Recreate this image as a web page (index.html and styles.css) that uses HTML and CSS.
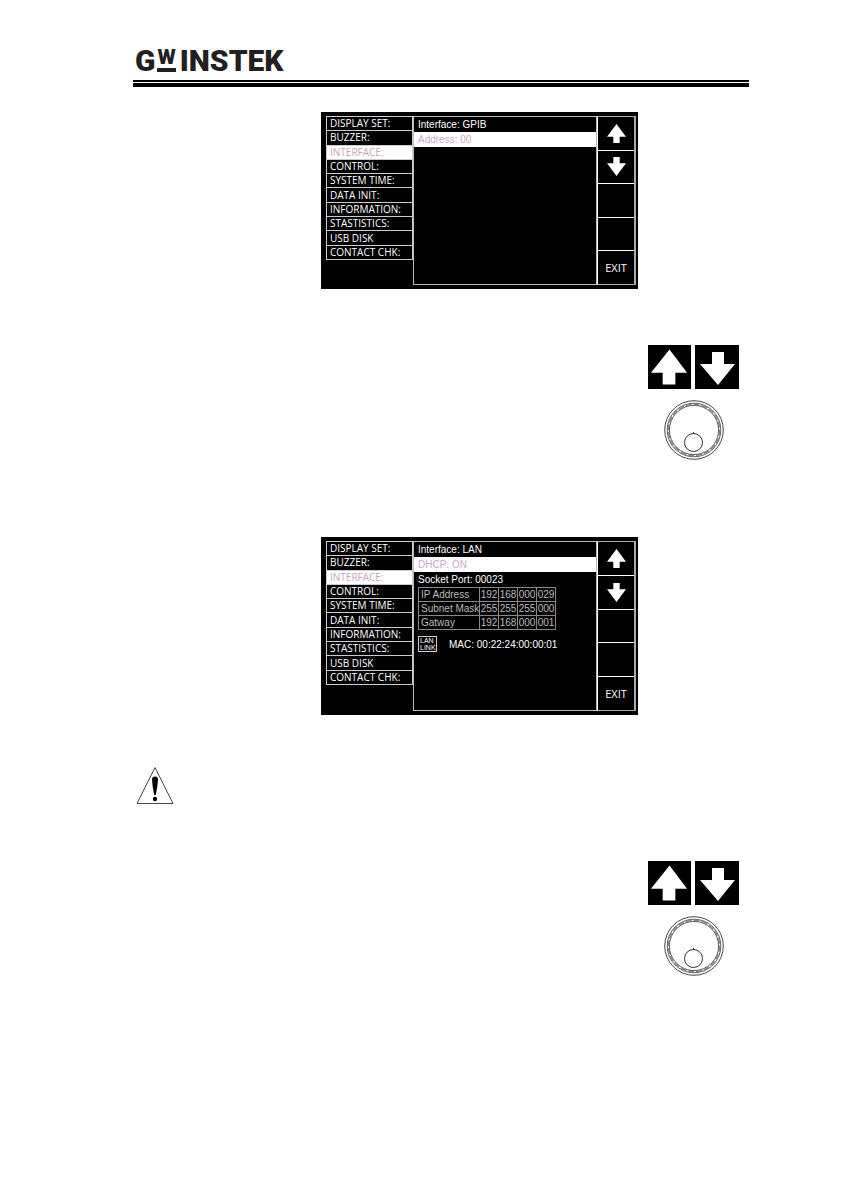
FILE: index.html
```
<!DOCTYPE html>
<html lang="en">
<head>
    <meta charset="UTF-8">
    <meta name="viewport" content="width=device-width, initial-scale=1.0">
    <title>GW Instek - Interface settings</title>
    <link rel="stylesheet" href="styles.css">
</head>
<body>

    <!-- shared shapes -->
    <svg class="symbols" aria-hidden="true">
        <symbol id="arrow-up" viewBox="0 0 18 18">
            <path d="M9 0L18 12H12V18H6V12H0Z" fill="#fff"/>
        </symbol>
        <symbol id="arrow-down" viewBox="0 0 18 18">
            <path d="M9 18L18 6H12V0H6V6H0Z" fill="#fff"/>
        </symbol>
        <symbol id="key-up" viewBox="0 0 44 44">
            <path d="M22 4L40 28H28V40H15V28H3Z" fill="#fff"/>
        </symbol>
        <symbol id="key-down" viewBox="0 0 44 44">
            <path d="M23 40L40 19H29V7H17V19H5Z" fill="#fff"/>
        </symbol>
        <symbol id="knob" viewBox="0 0 60 60">
            <g fill="none" stroke="#333">
                <circle cx="30" cy="30" r="29.3" stroke-width="0.9"/>
                <circle cx="30" cy="30" r="26.8" stroke-width="0.8"/>
                <circle cx="30" cy="30" r="25.7" stroke="#888" stroke-width="1.4" stroke-dasharray="6 2"/>
                <circle cx="30" cy="30" r="24.6" stroke-width="0.8"/>
                <circle cx="29.5" cy="42.5" r="9" stroke-width="1"/>
                <path d="M29.5 32v2" stroke-width="1"/>
            </g>
        </symbol>
    </svg>

    <header class="page-header">
        <div class="logo"><span>G</span><span class="logo-w">W</span><span>INSTEK</span></div>
        <div class="rule"></div>
    </header>

    <main>
        <section class="screen">
            <ul class="menu">
                <li><button>DISPLAY SET:</button></li>
                <li><button>BUZZER:</button></li>
                <li><button class="active">INTERFACE:</button></li>
                <li><button>CONTROL:</button></li>
                <li><button>SYSTEM TIME:</button></li>
                <li><button>DATA INIT:</button></li>
                <li><button>INFORMATION:</button></li>
                <li><button>STASTISTICS:</button></li>
                <li><button>USB DISK</button></li>
                <li><button>CONTACT CHK:</button></li>
            </ul>
            <div class="panel">
                <p>Interface: GPIB</p>
                <p class="selected">Address: 00</p>
            </div>
            <div class="softkeys">
                <button aria-label="Up"><svg><use href="#arrow-up"/></svg></button>
                <button aria-label="Down"><svg><use href="#arrow-down"/></svg></button>
                <button aria-label="Softkey 3"></button>
                <button aria-label="Softkey 4"></button>
                <button>EXIT</button>
            </div>
        </section>

        <div class="controls">
            <button class="key" aria-label="Up"><svg><use href="#key-up"/></svg></button>
            <button class="key" aria-label="Down"><svg><use href="#key-down"/></svg></button>
            <svg class="knob"><use href="#knob"/></svg>
        </div>

        <section class="screen lan">
            <ul class="menu">
                <li><button>DISPLAY SET:</button></li>
                <li><button>BUZZER:</button></li>
                <li><button class="active">INTERFACE:</button></li>
                <li><button>CONTROL:</button></li>
                <li><button>SYSTEM TIME:</button></li>
                <li><button>DATA INIT:</button></li>
                <li><button>INFORMATION:</button></li>
                <li><button>STASTISTICS:</button></li>
                <li><button>USB DISK</button></li>
                <li><button>CONTACT CHK:</button></li>
            </ul>
            <div class="panel">
                <p>Interface: LAN</p>
                <p class="selected">DHCP: ON</p>
                <p>Socket Port: 00023</p>
                <table class="address-table">
                    <tr><th scope="row">IP Address</th><td>192</td><td>168</td><td>000</td><td>029</td></tr>
                    <tr><th scope="row">Subnet Mask</th><td>255</td><td>255</td><td>255</td><td>000</td></tr>
                    <tr><th scope="row">Gatway</th><td>192</td><td>168</td><td>000</td><td>001</td></tr>
                </table>
                <div class="mac-row">
                    <span class="lan-link">LAN<br>LINK</span>
                    <span>MAC: 00:22:24:00:00:01</span>
                </div>
            </div>
            <div class="softkeys">
                <button aria-label="Up"><svg><use href="#arrow-up"/></svg></button>
                <button aria-label="Down"><svg><use href="#arrow-down"/></svg></button>
                <button aria-label="Softkey 3"></button>
                <button aria-label="Softkey 4"></button>
                <button>EXIT</button>
            </div>
        </section>

        <svg class="warning" viewBox="0 0 38 38" role="img" aria-label="Caution">
            <path d="M19 0.5L37 36.5H1Z" fill="none" stroke="#333" stroke-width="0.9"/>
            <path d="M16 12.5Q16 9.5 19 9.5T22 12.5Q21.6 20 19.8 28H18.2Q16.4 20 16 12.5Z"/>
            <circle cx="19" cy="32" r="2.2"/>
        </svg>

        <div class="controls">
            <button class="key" aria-label="Up"><svg><use href="#key-up"/></svg></button>
            <button class="key" aria-label="Down"><svg><use href="#key-down"/></svg></button>
            <svg class="knob"><use href="#knob"/></svg>
        </div>
    </main>

</body>
</html>
```
FILE: styles.css
```
* {
    box-sizing: border-box;
}
body {
    margin: 0;
    padding: 46px 93px 40px 133px;
    background: white;
    font-family: "Liberation Sans", Arial, sans-serif;
}
p, ul {
    margin: 0;
    padding: 0;
}
button {
    margin: 0;
    padding: 0;
    border: none;
    background: black;
    color: white;
    cursor: pointer;
}
svg {
    display: block;
}
.symbols {
    position: absolute;
    width: 0;
    height: 0;
}
.logo {
    display: flex;
    align-items: flex-start;
    gap: 2px;
    height: 34px;
    padding-left: 2px;
    font-family: Roboto, sans-serif;
    font-weight: 900;
    font-size: 30px;
    line-height: 30px;
    color: #231f20;
}
.logo-w {
    height: 26px;
    margin-right: 2px;
    border-bottom: 4px solid #231f20;
    font-size: 21px;
    line-height: 22px;
}
.rule {
    height: 7px;
    border-top: 2px solid black;
    border-bottom: 4px solid black;
}
main {
    display: flex;
    flex-direction: column;
}
.screen {
    display: grid;
    grid-template-columns: 87px 1fr 39px;
    width: 317px;
    margin: 25px 0 0 188px;
    padding: 4px 2px 4px 5px;
    background: black;
    color: white;
}
.menu {
    display: flex;
    flex-direction: column;
    height: 144px;
    border: 1px solid #ccc;
    list-style: none;
}
.menu li {
    display: flex;
    flex: 1;
}
.menu li + li {
    border-top: 1px solid #ccc;
}
.menu button {
    flex: 1;
    padding-left: 3px;
    font-family: "Open Sans", sans-serif;
    font-weight: 500;
    font-size: 10px;
    line-height: 13px;
    text-align: left;
}
.menu .active {
    background: white;
    color: #c9a3c0;
}
.panel {
    border: 1px solid #bbb;
    font-size: 10px;
}
.panel p {
    padding-left: 4px;
    line-height: 15px;
}
.panel .selected {
    background: white;
    color: #d0a5c8;
}
.softkeys {
    display: grid;
    grid-template-rows: repeat(5, 1fr);
    gap: 1px;
    height: 169px;
    border: 1px solid #aaa;
    border-left-color: white;
    border-right-width: 2px;
    background: white;
}
.softkeys button {
    display: flex;
    align-items: center;
    justify-content: center;
    font-family: "Open Sans", sans-serif;
    font-size: 11px;
}
.softkeys svg {
    width: 19px;
    height: 19px;
}
.address-table {
    table-layout: fixed;
    width: 138px;
    margin: 0 0 0 4px;
    border-collapse: collapse;
    color: #bbb;
}
.address-table th,
.address-table td {
    height: 14px;
    padding: 0;
    border: 1px solid #888;
    font-weight: normal;
    line-height: 13px;
    text-align: center;
}
.address-table th {
    width: 61px;
    padding-left: 2px;
    text-align: left;
    white-space: nowrap;
}
.mac-row {
    display: flex;
    align-items: center;
    gap: 12px;
    margin: 6px 0 0 4px;
}
.lan-link {
    width: 19px;
    padding-left: 1px;
    border: 1px solid #ccc;
    font-size: 7px;
    line-height: 7px;
}
.controls {
    display: grid;
    grid-template-columns: 43px 44px;
    gap: 11px 4px;
    align-self: flex-end;
    margin: 56px 10px 0 0;
}
.key svg {
    width: 100%;
    height: 44px;
}
.knob {
    grid-column: 1 / -1;
    justify-self: center;
    width: 60px;
    height: 60px;
}
.lan {
    margin-top: 77px;
}
.lan .softkeys {
    height: 170px;
}
.warning {
    width: 38px;
    height: 38px;
    margin: 52px 0 0 3px;
}
```
